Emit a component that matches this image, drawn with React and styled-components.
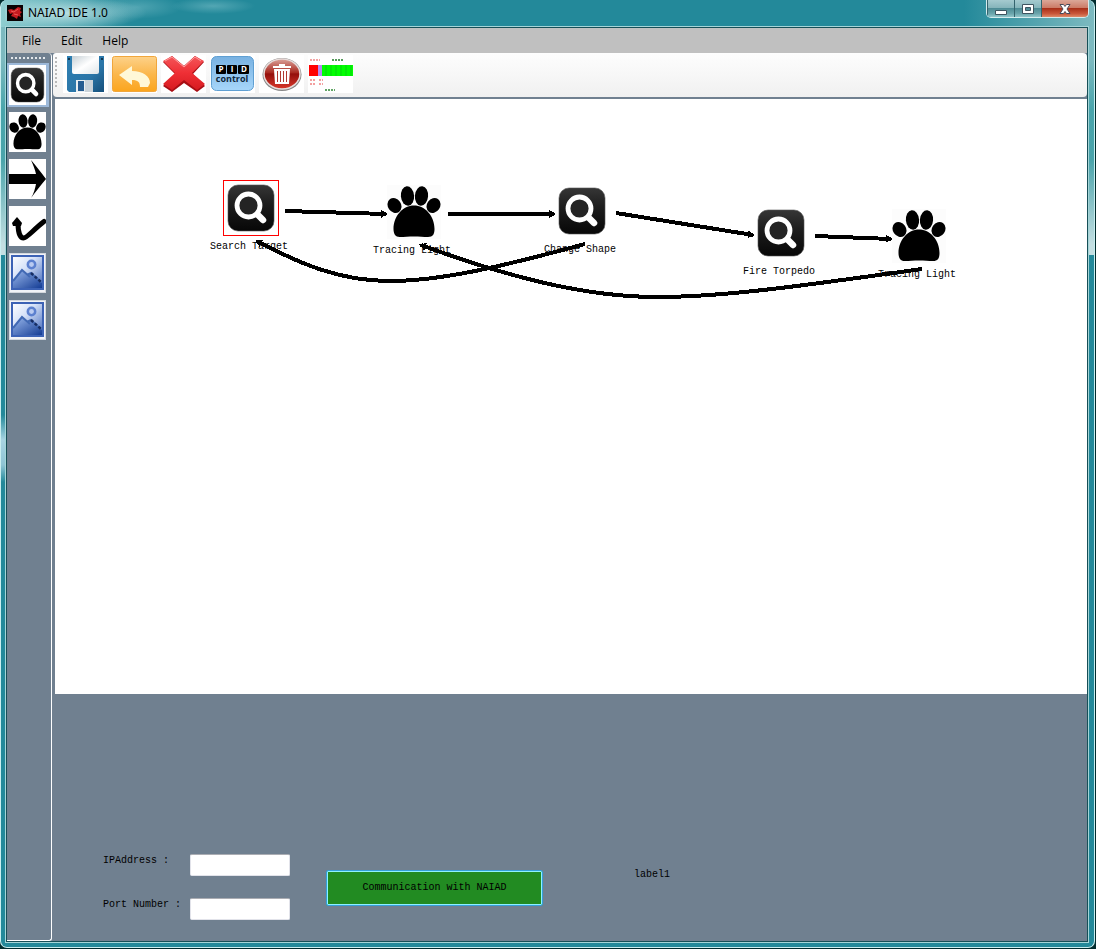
import React, { useState } from "react";
import styled, { createGlobalStyle } from "styled-components";

const slate = "#708090";
const mono = '"Liberation Mono", "Noto Sans CJK SC", monospace';
const ui = '"Open Sans", "Noto Sans", sans-serif';

const GlobalStyle = createGlobalStyle`
  *, *::before, *::after { box-sizing: border-box; }
  body { margin: 0; background: #022c2e; }
  button, input { font: inherit; margin: 0; }
`;

const Desktop = styled.div`
  display: flex;
  min-height: 100vh;
  padding: 0 1px 1px 0;
`;

const Window = styled.div`
  flex: 1;
  min-width: 0;
  display: flex;
  flex-direction: column;
  border: 1px solid #c9eef0;
  border-top: 0;
  border-radius: 7px;
  padding: 0 5px 4px 4px;
  background:
    linear-gradient(90deg, #8fcdd0, transparent 130px) 0 0 / 100% 27px no-repeat,
    linear-gradient(270deg, #7dbac0, transparent 130px) 0 0 / 100% 27px no-repeat,
    linear-gradient(#23899a, #23899a) 0 0 / 100% 27px no-repeat,
    linear-gradient(transparent 415px, #a8d4e2 440px, #8ec4d4 465px, transparent 482px) 0 0 / 8px 482px no-repeat,
    linear-gradient(#7dbac0 0, #7dbac0 60px, #49a5ac 110px, #4aa4ab 160px, #c4dfe2 245px, #c4dfe2 255px, #23899a 255px);
`;

const TitleBar = styled.header`
  display: flex;
  align-items: flex-start;
  height: 26px;
  padding-left: 2px;
  background:
    radial-gradient(45px 12px at 132px 7px, rgba(160, 214, 220, 0.35), transparent),
    radial-gradient(42px 8px at 208px 6px, rgba(130, 195, 204, 0.5), transparent),
    radial-gradient(80px 16px at 62px 13px, rgba(215, 240, 240, 0.75), transparent);
`;

const AppIcon = styled.svg`
  width: 16px;
  height: 16px;
  margin-top: 5px;
`;

const Title = styled.h1`
  flex: 1;
  margin: 4px 0 0 5px;
  font: 400 12px/18px "Noto Sans", ${ui};
  color: #000;
`;

const WindowButtons = styled.div`
  display: flex;
  height: 18px;
  border: 1px solid #d5ecee;
  border-top: 0;
  border-radius: 0 0 5px 5px;
  overflow: hidden;
`;

const WindowButton = styled.button`
  display: flex;
  align-items: center;
  justify-content: center;
  width: ${(p) => (p.$close ? 47 : 27)}px;
  padding: 0;
  border: 0;
  border-left: 1px solid #35636d;
  background: ${(p) =>
    p.$close
      ? "linear-gradient(#dba799 0, #cc7c68 45%, #a9301a 50%, #c9573a 80%, #df8a68)"
      : "linear-gradient(#a5cacf 0, #86b5bb 45%, #4e8c95 50%, #6ba5ac 80%, #93c6ca)"};
  svg { display: block; width: 12px; height: 12px; }
`;

const Client = styled.div`
  flex: 1;
  display: flex;
  flex-direction: column;
  border: 1px solid #174f57;
  box-shadow: 0 0 0 1px #a5d5d8;
  background: ${slate};
  margin: 1px;
`;

const MenuBar = styled.nav`
  display: flex;
  height: 25px;
  padding-left: 9px;
  background: #c0c0c0;
`;

const MenuItem = styled.button`
  padding: 0 6px;
  margin-right: 8px;
  border: 0;
  background: none;
  font: 400 12px/25px ${ui};
  color: #000;
`;

const Workspace = styled.div`
  flex: 1;
  display: flex;
  min-height: 0;
`;

const Palette = styled.aside`
  width: 45px;
  flex: none;
  display: flex;
  flex-direction: column;
  gap: 3px;
  border: 1px solid #fff;
  border-width: 0 1px 1px 0;
  border-radius: 0 4px 3px 0;
`;

const Grip = styled.div`
  flex: none;
  width: ${(p) => (p.$vertical ? 2 : 36)}px;
  height: ${(p) => (p.$vertical ? 31 : 2)}px;
  margin: ${(p) => (p.$vertical ? "4px 2px 0 2px" : "4px 0 1px 4px")};
  background: ${(p) =>
    p.$vertical
      ? "repeating-linear-gradient(#b9b9b9 0 2px, transparent 2px 4px)"
      : "repeating-linear-gradient(90deg, #e4e8ec 0 2px, transparent 2px 4px)"};
`;

const PaletteButton = styled.button`
  display: flex;
  width: 42px;
  height: 44px;
  padding: 2px;
  border: 0;
  background: ${(p) => (p.$selected ? "#9db9d9" : "none")};
  svg { display: block; width: 37px; height: 40px; background: #fff; }
`;

const Main = styled.main`
  flex: 1;
  min-width: 0;
  display: flex;
  flex-direction: column;
  padding-left: 1px;
`;

const Toolbar = styled.div`
  display: flex;
  gap: 4px;
  height: 44px;
  margin-bottom: 2px;
  background: linear-gradient(#fdfdfd, #f7f7f7 50%, #f0f0f0);
  border-radius: 3px 4px 4px 4px;
`;

const ToolButton = styled.button`
  width: 45px;
  height: 38px;
  margin-top: 2px;
  padding: 0;
  border: 0;
  background: #fff;
  svg { display: block; width: 45px; height: 38px; }
`;

const Canvas = styled.section`
  position: relative;
  flex: 1;
  min-height: 240px;
  margin-left: 2px;
  background: #fff;
  overflow: hidden;
`;

const Node = styled.div`
  position: absolute;
  left: ${(p) => p.$x}px;
  top: ${(p) => p.$y}px;
  width: 82px;
  display: flex;
  flex-direction: column;
  align-items: center;
`;

const NodeIcon = styled.div`
  width: 56px;
  height: 56px;
  border: 1px solid ${(p) => (p.$selected ? "#f00" : "transparent")};
  svg { display: block; width: 54px; height: 54px; }
`;

const NodeLabel = styled.span`
  margin-top: 5px;
  padding-right: 4px;
  font: 400 10px/12px ${mono};
  white-space: nowrap;
  color: #000;
`;

const Links = styled.svg`
  position: absolute;
  inset: 0;
  width: 100%;
  height: 100%;
  fill: none;
  stroke: #000;
  stroke-width: 4;
  shape-rendering: crispEdges;
`;

const Panel = styled.form`
  display: flex;
  align-items: flex-start;
  flex: none;
  padding: 160px 16px 21px 50px;
  font: 400 10px/14px ${mono};
  color: #000;
`;

const Fields = styled.div`
  display: grid;
  grid-template-columns: 87px 100px;
  row-gap: 22px;
`;

const Field = styled.input`
  width: 100px;
  height: 22px;
  padding: 0 4px;
  border: 1px solid #e2e3ea;
  border-top-color: #abadb3;
  border-radius: 2px;
  background: #fff;
`;

const ConnectButton = styled.button`
  width: 217px;
  height: 36px;
  margin: 16px 0 0 36px;
  padding: 0;
  border: 1px solid #35a0d8;
  border-radius: 2px;
  box-shadow: inset 0 0 0 1px #8ff0ff;
  background: #228b22;
  color: #000;
`;

const Status = styled.output`
  margin: 14px 0 0 91px;
`;

function SearchArt() {
  return (
    <>
      <defs>
        <linearGradient id="tile" x2="0" y2="1">
          <stop offset="0" stopColor="#363636" />
          <stop offset=".4" stopColor="#1e1e1e" />
          <stop offset="1" stopColor="#070707" />
        </linearGradient>
      </defs>
      <rect x="4" y="4" width="46" height="46" rx="10" fill="url(#tile)" stroke="#555" strokeWidth=".6" />
      <path d="M33 33l6 6" stroke="#fff" strokeWidth="6.5" strokeLinecap="round" />
      <circle cx="24.5" cy="24.5" r="11.5" fill="#242424" stroke="#fff" strokeWidth="4.8" />
    </>
  );
}

function PawArt() {
  return (
    <>
      <ellipse cx="7.5" cy="20.500" rx="6.600" ry="7.800" transform="rotate(-35 7.5 20.5)" />
      <ellipse cx="20.500" cy="11" rx="6.600" ry="9.800" transform="rotate(-5 20.5 11)" />
      <ellipse cx="34.500" cy="11" rx="6.600" ry="9.800" transform="rotate(5 34.5 11)" />
      <ellipse cx="46.500" cy="20.500" rx="6.600" ry="7.800" transform="rotate(35 46.5 20.5)" />
      <path d="M27 20.500C16 20.500 6.500 31 6.500 44c0 5 2 8 6 8 5 0 9-.5 14.500-.5s9.500.5 14 .5c5 0 6.500-3 6.500-8C47.500 31 38 20.500 27 20.500z" />
    </>
  );
}

const SearchIcon = () => (
  <svg viewBox="0 0 54 54"><SearchArt /></svg>
);
const PawIcon = () => (
  <svg viewBox="0 0 54 54"><rect width="54" height="54" fill="#fcfcfc" /><PawArt /></svg>
);
const PaletteSearch = () => (
  <svg viewBox="1 0 52 54" preserveAspectRatio="none"><SearchArt /></svg>
);
const PalettePaw = () => (
  <svg viewBox="0 -2 54 58" preserveAspectRatio="none"><PawArt /></svg>
);
const ArrowIcon = () => (
  <svg viewBox="0 0 37 40"><path d="M0 15h27C26 10 24 6 22 1c5 6 10 12 15 19-5 6-10 12-15 19 3-5 4-9 5-14H0z" /></svg>
);
const CurveIcon = () => (
  <svg viewBox="0 0 37 40">
    <path d="M9 17c0 9 2 15 5.500 15S24 24 35 15.500" fill="none" stroke="#000" strokeWidth="5" strokeLinecap="round" />
    <path d="M3 17l5-6 5 6-1 3H4z" />
  </svg>
);
const PictureIcon = () => (
  <svg viewBox="0 0 37 40">
    <defs>
      <linearGradient id="sky" x2="1" y2="1">
        <stop offset="0" stopColor="#fff" /><stop offset=".4" stopColor="#d5e1f8" /><stop offset="1" stopColor="#3a62b8" />
      </linearGradient>
      <linearGradient id="hill" x2="1" y2="1">
        <stop offset="0" stopColor="#9bb9ed" /><stop offset="1" stopColor="#143c94" />
      </linearGradient>
    </defs>
    <rect x=".5" y=".5" width="36" height="39" fill="#f1f3f7" stroke="#d3d8de" />
    <rect x="3" y="3" width="31" height="33" fill="url(#sky)" stroke="#3c62b5" strokeWidth="2" />
    <path d="M4 28L13 17l6 6 4-3 10 10v5H4z" fill="url(#hill)" />
    <path d="M4 28L13 17l8 7M18 22l4-2 10 9" fill="none" stroke="#4169b4" strokeWidth="2" />
    <path d="M22 20l10 9" stroke="#172d62" strokeWidth="2.500" strokeDasharray="3 2" />
    <circle cx="22.500" cy="11.500" r="3.700" fill="#bacbf1" stroke="#5c80cf" strokeWidth="2.500" />
  </svg>
);

const SaveIcon = () => (
  <svg viewBox="0 0 45 38">
    <defs>
      <linearGradient id="disk" x2="1" y2="1">
        <stop offset="0" stopColor="#2d7fb2" /><stop offset=".6" stopColor="#2b76a8" /><stop offset="1" stopColor="#154f7b" />
      </linearGradient>
      <linearGradient id="sheet" x2="1" y2="1">
        <stop offset="0" stopColor="#c5cfd5" /><stop offset=".5" stopColor="#fff" /><stop offset="1" stopColor="#dfe5e8" />
      </linearGradient>
    </defs>
    <path d="M4 1h37v36H6l-2-2z" fill="url(#disk)" />
    <path d="M9 1h27v16q0 2-2 2H11q-2 0-2-2z" fill="url(#sheet)" />
    <path d="M5 3h2v2H5zM38 3h2v2h-2z" fill="#12364f" />
    <path d="M13 25h17v12H13z" fill="#e9eef1" />
    <path d="M15 26h6v10h-6z" fill="#245c91" />
    <path d="M22 25h8v12h-8z" fill="#cad3da" />
  </svg>
);
const UndoIcon = () => (
  <svg viewBox="0 0 45 38">
    <defs>
      <linearGradient id="amber" x2="0" y2="1">
        <stop offset="0" stopColor="#fdd28a" /><stop offset=".5" stopColor="#fbb74c" /><stop offset="1" stopColor="#fba51d" />
      </linearGradient>
    </defs>
    <rect x=".5" y="1.500" width="44" height="35" rx="2" fill="url(#amber)" stroke="#f0a63c" />
    <path d="M7 20L20 11v5c11 0 18 5 18 12l-2 4h-8c0-5-2-7-8-7v5z" fill="#fff8d7" />
  </svg>
);
const CloseIcon = () => (
  <svg viewBox="0 0 45 38">
    <defs>
      <linearGradient id="cross" x2="0" y2="1">
        <stop offset="0" stopColor="#f4575a" /><stop offset=".5" stopColor="#ef2f35" /><stop offset="1" stopColor="#d61b20" />
      </linearGradient>
    </defs>
    <path d="M2 7l9-6 12 10L34 1l9 6-11 12 12 12-8 6-13-9-12 9-9-6 12-12z" fill="#a90e14" />
    <path d="M2 6l9-5 12 10L34 1l9 5-12 12 13 11-8 6-13-10-12 10-9-6 12-11z" fill="url(#cross)" />
    <path d="M4 6l7-4 12 10L34 2l6 4" fill="none" stroke="#ff9a9b" />
  </svg>
);
const PidIcon = () => (
  <svg viewBox="0 0 45 38">
    <defs>
      <linearGradient id="pid" x2="0" y2="1">
        <stop offset="0" stopColor="#78b1e1" /><stop offset="1" stopColor="#a7d6fa" />
      </linearGradient>
    </defs>
    <rect x="1.500" y="1.500" width="42" height="34" rx="5" fill="url(#pid)" stroke="#5f9fd2" />
    <rect x="6" y="10" width="10" height="9" rx="1" />
    <rect x="17" y="10" width="10" height="9" rx="1" />
    <rect x="28" y="10" width="11" height="9" rx="1" />
    <g fontFamily="Open Sans, sans-serif" fontWeight="700" textAnchor="middle">
      <text x="11" y="17" fontSize="8" fill="#fff">P</text>
      <text x="22" y="17" fontSize="8" fill="#fff">I</text>
      <text x="34" y="17" fontSize="8" fill="#fff">D</text>
      <text x="22" y="27" fontSize="9" fill="#10283c">control</text>
    </g>
  </svg>
);
const TrashIcon = () => (
  <svg viewBox="0 0 45 38">
    <defs>
      <linearGradient id="ruby" x2="0" y2="1">
        <stop offset="0" stopColor="#dba39b" /><stop offset=".45" stopColor="#a92a20" /><stop offset=".5" stopColor="#940f0b" /><stop offset="1" stopColor="#d9392b" />
      </linearGradient>
    </defs>
    <ellipse cx="23" cy="19.500" rx="19.500" ry="16.500" fill="#858585" />
    <ellipse cx="23" cy="19" rx="18" ry="15" fill="url(#ruby)" stroke="#e8dcda" strokeWidth="1.500" />
    <path d="M14 11h18v2H14zM20 9h6v2h-6z" fill="#fff" />
    <path d="M15 14h16l-1 15H16z" fill="#fff" />
    <path d="M18.500 16v11M21.500 16v11M24.500 16v11M27.500 16v11" stroke="#b03a31" strokeWidth="1" />
  </svg>
);
const ChartIcon = () => (
  <svg viewBox="0 0 45 38">
    <path d="M1 10h9v11H1z" fill="#f00" />
    <path d="M10 10h4v11h-4z" fill="#b68af0" />
    <path d="M14 10h31v11H14z" fill="#0f0" />
    <path d="M18 10v11M23 10v11M28 10v11M33 10v11M38 10v11M43 10v11" stroke="#08cf10" />
    <g fill="none" strokeWidth="2" strokeDasharray="2 1">
      <path d="M2 5h10" stroke="#f3a4a4" />
      <path d="M24 5h11" stroke="#55995a" />
      <path d="M2 25h6M11 25h4M2 29h6M11 29h4" stroke="#f3a0a0" />
      <path d="M17 35h10" stroke="#61a565" />
    </g>
  </svg>
);

const paletteItems = [
  ["Search", PaletteSearch],
  ["Tracing", PalettePaw],
  ["Arrow", ArrowIcon],
  ["Curve", CurveIcon],
  ["Picture 1", PictureIcon],
  ["Picture 2", PictureIcon],
];

const tools = [
  ["Save", SaveIcon],
  ["Undo", UndoIcon],
  ["Delete", CloseIcon],
  ["PID control", PidIcon],
  ["Trash", TrashIcon],
  ["Chart", ChartIcon],
];

const nodes = [
  { x: 155, y: 81, label: "Search Target", Icon: SearchIcon },
  { x: 318, y: 85, label: "Tracing Light", Icon: PawIcon },
  { x: 486, y: 84, label: "Change Shape", Icon: SearchIcon },
  { x: 685, y: 106, label: "Fire Torpedo", Icon: SearchIcon },
  { x: 823, y: 109, label: "Tracing Light", Icon: PawIcon },
];

const links = [
  "M230 112L331 115",
  "M393 115H499",
  "M561 114L698 136",
  "M760 137L836 140",
  "M530 145C445 168 385 182 335 182S245 165 202 142",
  "M867 170C765 184 675 198 602 198S450 177 366 146",
];

export default function App() {
  const [tool, setTool] = useState(0);
  return (
    <>
      <GlobalStyle />
      <Desktop>
        <Window>
          <TitleBar>
            <AppIcon viewBox="0 0 16 16" aria-hidden="true">
              <rect width="16" height="16" fill="#0a0203" />
              <path d="M1 5l3-1 3 1 4-3 3 1-1 3 2 1-2 2 1 3-3-1-1 3-3-2-3-1 2-3-3 1z" fill="#c41a1f" />
              <path d="M4 6l3 1 4-3M7 9l4 1" stroke="#ef5a56" fill="none" />
            </AppIcon>
            <Title>NAIAD IDE 1.0</Title>
            <WindowButtons>
              <WindowButton aria-label="Minimize">
                <svg viewBox="0 0 12 12"><path d="M.5 7.500h11v4H.5z" fill="#fff" stroke="#3e5560" /></svg>
              </WindowButton>
              <WindowButton aria-label="Maximize">
                <svg viewBox="0 0 12 12"><path fillRule="evenodd" d="M.5 1.500h11v9H.5zM3.500 4.500v3h5v-3z" fill="#fff" stroke="#3e5560" /></svg>
              </WindowButton>
              <WindowButton $close aria-label="Close">
                <svg viewBox="0 0 12 12"><path d="M1 1.500h3.500L6 3.500l1.500-2H11L8 6l3 4.500H7.500L6 8.500l-1.500 2H1L4 6z" fill="#fff" stroke="#4a4a58" /></svg>
              </WindowButton>
            </WindowButtons>
          </TitleBar>
          <Client>
            <MenuBar>
              <MenuItem>File</MenuItem>
              <MenuItem>Edit</MenuItem>
              <MenuItem>Help</MenuItem>
            </MenuBar>
            <Workspace>
              <Palette>
                <Grip />
                {paletteItems.map(([name, Icon], i) => (
                  <PaletteButton key={name} aria-label={name} $selected={i === tool} onClick={() => setTool(i)}>
                    <Icon />
                  </PaletteButton>
                ))}
              </Palette>
              <Main>
                <Toolbar>
                  <Grip $vertical />
                  {tools.map(([name, Icon]) => (
                    <ToolButton key={name} aria-label={name}><Icon /></ToolButton>
                  ))}
                </Toolbar>
                <Canvas>
                  {nodes.map(({ x, y, label, Icon }, i) => (
                    <Node key={i} $x={x} $y={y}>
                      <NodeIcon $selected={i === 0}><Icon /></NodeIcon>
                      <NodeLabel>{label}</NodeLabel>
                    </Node>
                  ))}
                  <Links aria-hidden="true">
                    <defs>
                      <marker id="head" markerUnits="userSpaceOnUse" markerWidth="10" markerHeight="10" refX="6" refY="5" orient="auto">
                        <path d="M1 1L8 5L1 9z" fill="#000" stroke="none" />
                      </marker>
                    </defs>
                    {links.map((d) => <path key={d} d={d} markerEnd="url(#head)" />)}
                  </Links>
                </Canvas>
                <Panel onSubmit={(e) => e.preventDefault()}>
                  <Fields>
                    <label htmlFor="ip">IPAddress :</label>
                    <Field id="ip" />
                    <label htmlFor="port">Port Number :</label>
                    <Field id="port" />
                  </Fields>
                  <ConnectButton type="submit">Communication with NAIAD</ConnectButton>
                  <Status>label1</Status>
                </Panel>
              </Main>
            </Workspace>
          </Client>
        </Window>
      </Desktop>
    </>
  );
}
